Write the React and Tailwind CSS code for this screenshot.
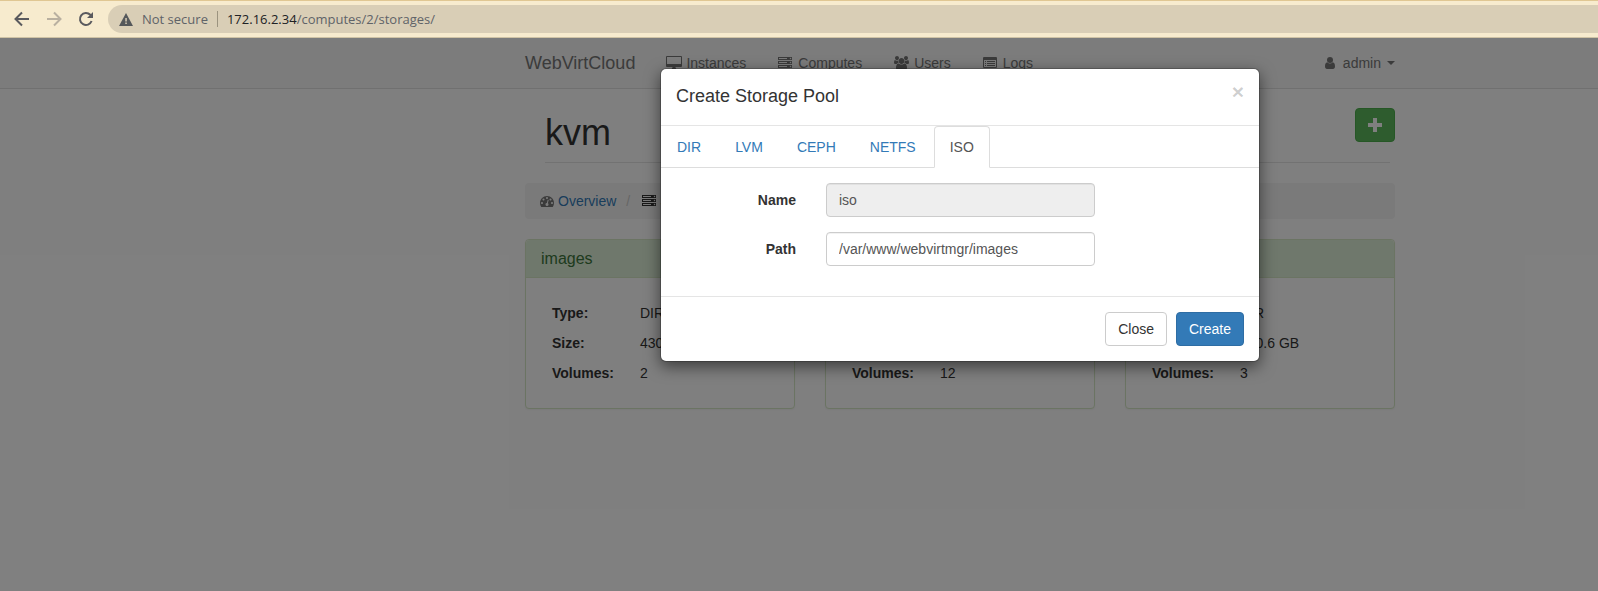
import React from "react";

const pools = [
  { name: "images", type: "DIR", size: "430.6 GB", volumes: "2" },
  { name: "iso", type: "DIR", size: "430.6 GB", volumes: "12" },
  { name: "templates", type: "DIR", size: "430.6 GB", volumes: "3" },
];

const tabs = ["DIR", "LVM", "CEPH", "NETFS", "ISO"];

function Desktop() {
  return (
    <svg width="16" height="14" viewBox="0 0 16 14" fill="currentColor" aria-hidden="true">
      <path fillRule="evenodd" d="M1 0h14a1 1 0 0 1 1 1v9a1 1 0 0 1-1 1H1a1 1 0 0 1-1-1V1a1 1 0 0 1 1-1zM1 1v7h14V1z" />
      <path d="M6.500 11h3c0 1 .8 1.500.8 2.100 0 .3-.2.400-.5.400H6.200c-.3 0-.5-.1-.5-.4 0-.6.8-1.100.8-2.100z" />
    </svg>
  );
}

function Server() {
  return (
    <svg width="14" height="14" viewBox="0 0 1792 1792" fill="currentColor" aria-hidden="true">
      <path fillRule="evenodd" d="M0 128h1792v384H0zM128 256v128h1024V256zM0 640h1792v384H0zM128 768v128h1024V768zM0 1152h1792v384H0zM128 1280v128h1024v-128zM1600 224a96 96 0 1 0 0 192 96 96 0 0 0 0-192zM1600 736a96 96 0 1 0 0 192 96 96 0 0 0 0-192zM1600 1248a96 96 0 1 0 0 192 96 96 0 0 0 0-192z" />
    </svg>
  );
}

function Users() {
  return (
    <svg width="15" height="14" viewBox="0 0 1920 1792" fill="currentColor" aria-hidden="true">
      <path d="M593 896q-162 5-265 128H194q-82 0-138-40.500T0 865q0-353 124-353 6 0 43.500 21t97.500 42.500T384 597q67 0 133-23-5 37-5 66 0 139 81 256zm1071 637q0 120-73 189.500t-194 69.500H523q-121 0-194-69.500T256 1533q0-53 3.500-103.500t14-109T300 1212t43-97.500 62-81 85.500-53.500T602 960q10 0 43 21.500t73 48 107 48 135 21.500 135-21.500 107-48 73-48 43-21.500q61 0 111.500 20t85.500 53.500 62 81 43 97.500 26.500 108.500 14 109 3.500 103.500zM640 256q0 106-75 181t-181 75-181-75-75-181 75-181T384 0t181 75 75 181zm704 384q0 159-112.500 271.500T960 1024 688.500 911.500 576 640t112.500-271.500T960 256t271.500 112.500T1344 640zm576 225q0 78-56 118.500t-138 40.500h-134q-103-123-265-128 81-117 81-256 0-29-5-66 66 23 133 23 59 0 119-21.500t97.500-42.500 43.500-21q124 0 124 353zm-128-609q0 106-75 181t-181 75-181-75-75-181 75-181 181-75 181 75 75 181z" />
    </svg>
  );
}

function ListPanel() {
  return (
    <svg width="14" height="12" viewBox="0 0 14 12" fill="currentColor" aria-hidden="true">
      <path fillRule="evenodd" d="M1 0h12a1 1 0 0 1 1 1v9a1 1 0 0 1-1 1H1a1 1 0 0 1-1-1V1a1 1 0 0 1 1-1zM1 3v7h12V3zM2 4h1v1H2zM4 4h8v1H4zM2 6h1v1H2zM4 6h8v1H4zM2 8h1v1H2zM4 8h8v1H4z" />
    </svg>
  );
}

function User() {
  return (
    <svg width="10" height="12" viewBox="0 0 10 12" fill="currentColor" aria-hidden="true">
      <circle cx="5" cy="3" r="3" />
      <path d="M2.300 5.300C.7 5.500 0 7.200 0 9.500 0 11 .8 12 2 12h6c1.200 0 2-1 2-2.500 0-2.300-.7-4-2.300-4.200C6.200 7 3.800 7 2.300 5.300z" />
    </svg>
  );
}

function Gauge() {
  return (
    <svg width="14" height="14" viewBox="0 0 1792 1792" fill="currentColor" aria-hidden="true">
      <path d="M384 1152q0-53-37.5-90.5T256 1024t-90.5 37.5T128 1152t37.5 90.5T256 1280t90.5-37.5T384 1152zm192-448q0-53-37.5-90.5T448 576t-90.5 37.5T320 704t37.5 90.5T448 832t90.5-37.5T576 704zm428 481l101-382q6-26-7.5-48.5T1059 725t-48 6.5-30 39.5l-101 382q-60 5-107 43.5t-63 98.5q-20 77 20 146t117 89 146-20 89-117q16-60-6-117t-72-91zm660-33q0-53-37.5-90.5T1536 1024t-90.5 37.5-37.5 90.5 37.5 90.5 90.5 37.5 90.5-37.5 37.5-90.5zm-640-640q0-53-37.5-90.5T896 384t-90.5 37.5T768 512t37.5 90.5T896 640t90.5-37.5T1024 512zm448 192q0-53-37.5-90.5T1344 576t-90.5 37.5T1216 704t37.5 90.5T1344 832t90.5-37.5T1472 704zm320 448q0 261-141 483-19 29-54 29H195q-35 0-54-29Q0 1414 0 1152q0-182 71-348t191-286 286-191 348-71 348 71 286 191 191 286 71 348z" />
    </svg>
  );
}

function BrowserBar() {
  return (
    <header className="relative z-20 flex h-[38px] items-center border-y border-t-[#e0c793] border-b-[#cfc3a5] bg-[#f7ebce] pl-[14px] font-['Open_Sans',sans-serif] text-[13px] text-[#5f6368]">
      <button type="button" aria-label="Back" className="mr-4 text-[#5a5a5e]">
        <svg width="16" height="16" viewBox="0 0 16 16" fill="none" stroke="currentColor" strokeWidth="2" aria-hidden="true">
          <path d="M15 8H2.500M8 1.500 1.500 8 8 14.500" />
        </svg>
      </button>
      <button type="button" aria-label="Forward" className="mr-4 text-[#b9b0a0]">
        <svg width="16" height="16" viewBox="0 0 16 16" fill="none" stroke="currentColor" strokeWidth="2" aria-hidden="true">
          <path d="M1 8h12.500M8 1.500 14.500 8 8 14.500" />
        </svg>
      </button>
      <button type="button" aria-label="Reload" className="mr-[14px] text-[#5a5a5e]">
        <svg width="16" height="16" viewBox="0 0 16 16" aria-hidden="true">
          <path d="M13.600 10A6 6 0 1 1 12.300 3.800L14 5.500" fill="none" stroke="currentColor" strokeWidth="2" />
          <path d="M15 1v6H9z" fill="currentColor" />
        </svg>
      </button>
      <div className="flex h-7 flex-1 items-center rounded-l-full bg-[#d9ceb6] pl-[11px]">
        <svg width="14" height="13" viewBox="0 0 14 13" className="mr-[9px]" aria-hidden="true">
          <path d="M7 0 14 13H0z" fill="#55585b" />
          <path d="M6.300 5h1.500v3.500H6.300zM6.300 9.500h1.500V11H6.300z" fill="#d9ceb6" />
        </svg>
        <span>Not secure</span>
        <span className="mx-[9px] h-4 w-px bg-[#9b937f]" />
        <span>
          <span className="text-[#202124]">172.16.2.34</span>/computes/2/storages/
        </span>
      </div>
    </header>
  );
}

function NavBar() {
  return (
    <nav className="grid h-[51px] grid-cols-[525fr_870px_203fr] border-b border-[#e0e0e0] bg-[#f8f8f8] text-[#777]">
      <div className="col-start-2 flex items-center">
        <a href="#home" className="mr-[31px] text-lg">WebVirtCloud</a>
        <a href="#instances" className="mr-8 flex items-center gap-1"><Desktop />Instances</a>
        <a href="#computes" className="mr-8 flex items-center gap-[6px]"><Server />Computes</a>
        <a href="#users" className="mr-8 flex items-center gap-[5px]"><Users />Users</a>
        <a href="#logs" className="flex items-center gap-[6px]"><ListPanel />Logs</a>
        <button type="button" className="ml-auto flex items-center">
          <span className="mr-2"><User /></span>
          admin
          <svg width="8" height="4" viewBox="0 0 8 4" fill="currentColor" className="ml-[6px]" aria-hidden="true"><path d="M0 0h8L4 4z" /></svg>
        </button>
      </div>
    </nav>
  );
}

function PoolCard({ pool }) {
  return (
    <section className="rounded border border-[#d6e9c6] bg-white shadow-xs">
      <h3 className="rounded-t border-b border-[#d6e9c6] bg-[#dff0d8] px-[15px] pt-[9px] pb-2 text-base leading-5 text-[#3c763d]">
        <a href="#pool">{pool.name}</a>
      </h3>
      <dl className="grid grid-cols-[88px_1fr] gap-y-[10px] px-[26px] py-[25px] leading-5">
        <dt className="font-bold">Type:</dt>
        <dd>{pool.type}</dd>
        <dt className="font-bold">Size:</dt>
        <dd>{pool.size}</dd>
        <dt className="font-bold">Volumes:</dt>
        <dd>{pool.volumes}</dd>
      </dl>
    </section>
  );
}

function StorageDialog() {
  return (
    <div role="dialog" aria-labelledby="dialog-title" className="w-[600px] self-start justify-self-center rounded-md border border-black/20 bg-white bg-clip-padding shadow-[0_5px_15px_rgba(0,0,0,0.5)]">
      <div className="flex h-[57px] items-start justify-between border-b border-[#e5e5e5] px-[15px] pt-[15px]">
        <h4 id="dialog-title" className="text-lg leading-6">Create Storage Pool</h4>
        <button type="button" aria-label="Close dialog" className="-mt-0.5 text-[21px] leading-5 font-bold text-black/20">×</button>
      </div>
      <div role="tablist" className="flex border-b border-[#ddd]">
        {tabs.map((tab) => (
          <button
            key={tab}
            type="button"
            role="tab"
            aria-selected={tab === "ISO"}
            className={
              tab === "ISO"
                ? "-mb-px rounded-t border border-[#ddd] border-b-white bg-white px-[15px] py-[10px] leading-5 text-[#555]"
                : "mr-[2px] -mb-px border border-transparent px-[15px] py-[10px] leading-5 text-[#337ab7]"
            }
          >
            {tab}
          </button>
        ))}
      </div>
      <form className="grid grid-cols-[135px_269px] items-center gap-x-[30px] gap-y-[15px] pt-[15px] pb-[30px]">
        <label htmlFor="pool-name" className="text-right font-bold">Name</label>
        <input id="pool-name" readOnly defaultValue="iso" className="h-[34px] rounded border border-[#ccc] bg-[#eee] px-3 text-[#555] inset-shadow-2xs" />
        <label htmlFor="pool-path" className="text-right font-bold">Path</label>
        <input id="pool-path" defaultValue="/var/www/webvirtmgr/images" className="h-[34px] rounded border border-[#ccc] bg-white px-3 text-[#555] inset-shadow-2xs" />
      </form>
      <div className="flex justify-end gap-[9px] border-t border-[#e5e5e5] p-[15px]">
        <button type="button" className="h-[34px] rounded border border-[#ccc] bg-white px-3">Close</button>
        <button type="button" className="h-[34px] rounded border border-[#2e6da4] bg-[#337ab7] px-3 text-white">Create</button>
      </div>
    </div>
  );
}

export default function App() {
  return (
    <div className="flex min-h-screen flex-col overflow-hidden bg-white font-['Liberation_Sans',Arial,sans-serif] text-sm text-[#333]">
      <BrowserBar />
      <div className="relative flex-1">
        <NavBar />
        <main className="grid grid-cols-[525fr_870px_203fr]">
          <div className="col-start-2">
            <div className="flex items-start justify-between pt-[19px]">
              <h1 className="pt-[5px] pl-5 text-4xl leading-10">kvm</h1>
              <button type="button" aria-label="Add storage" className="flex h-[34px] w-10 items-center justify-center rounded border border-[#4cae4c] bg-[#5cb85c] text-white">
                <svg width="14" height="14" viewBox="0 0 14 14" fill="currentColor" aria-hidden="true"><path d="M5 0h4v5h5v4H9v5H5V9H0V5h5z" /></svg>
              </button>
            </div>
            <div className="mt-[9px] mr-[5px] ml-5 border-b border-[#e5e5e5]" />
            <nav aria-label="Breadcrumb" className="my-5 flex h-9 items-center rounded bg-[#f5f5f5] px-[15px]">
              <a href="#overview" className="flex items-center gap-1 text-[#777]"><Gauge /><span className="text-[#337ab7]">Overview</span></a>
              <span className="pr-3 pl-[10px] text-[#ccc]">/</span>
              <a href="#storages" className="flex items-center gap-1"><Server />Storages</a>
            </nav>
            <div className="grid grid-cols-3 gap-[30px]">
              {pools.map((pool) => <PoolCard key={pool.name} pool={pool} />)}
            </div>
          </div>
        </main>
        <div className="absolute inset-0 grid grid-cols-[525fr_870px_203fr] bg-black/50 pt-[30px]">
          <div className="col-start-2 grid">
            <StorageDialog />
          </div>
        </div>
      </div>
    </div>
  );
}
